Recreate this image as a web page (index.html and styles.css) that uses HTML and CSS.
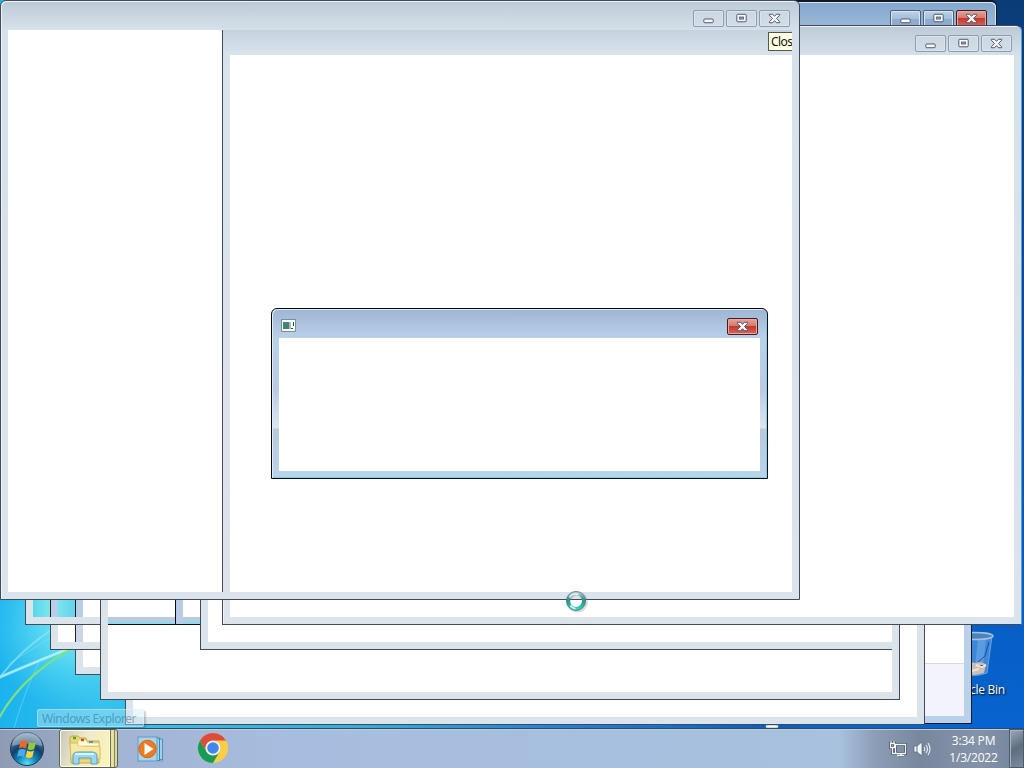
FILE: index.html
```html
<!DOCTYPE html>
<html lang="en">
<head>
<meta charset="utf-8">
<title>Desktop</title>
<link rel="stylesheet" href="styles.css">
</head>
<body>
<svg class="symbols" width="0" height="0" aria-hidden="true">
  <symbol id="min" viewBox="0 0 29 16"><rect x="9.500" y="8.500" width="10" height="4" rx="1" fill="#f7f9fb" stroke="#465165"/></symbol>
  <symbol id="max" viewBox="0 0 29 16"><rect x="9.500" y="3.500" width="10" height="8" rx="1" fill="#f7f9fb" stroke="#465165"/><rect x="12.500" y="6.500" width="4" height="2" fill="#b9c8d8" stroke="#465165"/></symbol>
  <symbol id="close" viewBox="0 0 29 16"><path d="M9 3.500h3.500l2 2.200 2-2.200H20v1L16.600 8l3.400 3.500v1h-3.500l-2-2.200-2 2.200H9v-1L12.400 8 9 4.500z" fill="#fafafa" stroke="#465165"/></symbol>
</svg>
<main class="desktop">
  <svg class="wallpaper" width="1024" height="768" viewBox="0 0 1024 768">
    <defs>
      <linearGradient id="sky"><stop offset="0" stop-color="#1bb2ee"/><stop offset=".1" stop-color="#35c2ed"/><stop offset=".35" stop-color="#36add8"/><stop offset=".55" stop-color="#2381d3"/><stop offset=".76" stop-color="#0b5dbd"/><stop offset="1" stop-color="#0960cc"/></linearGradient>
      <linearGradient id="night" x1="0" y1="0" x2="0" y2="1"><stop offset="0" stop-color="#0a3c78"/><stop offset=".7" stop-color="#075bbd"/><stop offset="1" stop-color="#0865d4"/></linearGradient>
      <radialGradient id="glow"><stop offset="0" stop-color="#8af2f4"/><stop offset="1" stop-color="#54dcf4" stop-opacity="0"/></radialGradient>
    </defs>
    <rect width="1024" height="768" fill="url(#sky)"/>
    <rect x="800" width="224" height="768" fill="url(#night)"/>
    <ellipse cx="75" cy="625" rx="90" ry="85" fill="url(#glow)"/>
    <g fill="none" stroke-linecap="round">
      <path d="M-4 679Q25 666 78 645" stroke="#c5f3fd" stroke-width="2.500" opacity=".8"/>
      <path d="M-2 680Q18 652 54 628" stroke="#92e5f8" stroke-width="2" opacity=".7"/>
      <path d="M10 663L50 638M14 728Q25 690 40 660" stroke="#83e1f8" opacity=".5"/>
      <path d="M-3 722Q20 676 78 645" stroke="#7ee37c" stroke-width="2"/>
      <path d="M767 726.500h10" stroke="#fff" stroke-width="2.500"/>
    </g>
  </svg>
  <div class="bin">
    <svg width="48" height="50" viewBox="0 0 48 50"><path d="M5 7h36l-5 37q-14 5-26 0z" fill="#3d86d8" stroke="#68a5df"/><path d="M27 9h8l-3 29h-8z" fill="#71aeea" opacity=".55"/><path d="M38 13l-4 14-7 6" fill="none" stroke="#16529c"/><path d="M10 39q7-8 14-5 8-2 11 2l-2 8q-12 4-23 0z" fill="#cbbeb5"/><path d="M25 36l6 2 4-2M21 42l7-2" stroke="#f2e4d4" stroke-width="2"/><ellipse cx="23" cy="7" rx="19" ry="3.500" fill="#4c83bb" stroke="#a6c2d8" stroke-width="1.500"/></svg>
    <span>Recycle Bin</span>
  </div>

  <section class="window active side"><div class="client split"><div></div><div class="footer-pane"></div></div></section>
  <section class="window active caption-only">
    <div class="controls"><svg class="ctl"><use href="#min"/></svg><svg class="ctl"><use href="#max"/></svg><svg class="ctl red"><use href="#close"/></svg></div>
  </section>
  <section class="window w125"><div class="client"></div></section>
  <section class="window w75"><div class="client"></div></section>
  <section class="window w50"><div class="client"><div class="trail edge"></div></div></section>
  <section class="window w25"><div class="client">
    <div class="trail trail50"></div><div class="trail trail75"></div>
  </div></section>
  <section class="window w100"><div class="client">
    <div class="trail strip"></div><div class="trail strip175"></div>
    <div class="window w200"><div class="client"></div></div>
  </div></section>
  <section class="window w222">
    <div class="controls"><svg class="ctl"><use href="#min"/></svg><svg class="ctl"><use href="#max"/></svg><svg class="ctl"><use href="#close"/></svg></div>
    <div class="client"></div>
  </section>
  <section class="window front">
    <div class="controls"><svg class="ctl"><use href="#min"/></svg><svg class="ctl"><use href="#max"/></svg><svg class="ctl"><use href="#close"/></svg></div>
    <div class="client columns"><div class="left-pane"></div><div class="right-pane"><div class="inner"></div></div><div class="tip">Clos</div></div>
  </section>
  <section class="window active dialog">
    <svg class="app-icon" width="17" height="14" viewBox="0 0 17 14"><rect x=".5" y=".5" width="14" height="12" fill="#f9fcf9" stroke="#7c9292"/><rect x="2" y="3" width="6" height="7" fill="#487f7d"/><path d="M8 3h2v7H8z" fill="#a2c4bc"/><path d="M12.500 3v4M10 9.500h2" stroke="#34484c"/></svg>
    <div class="controls"><svg class="ctl red"><use href="#close"/></svg></div>
    <div class="client"></div>
  </section>
  <svg class="cursor" width="26" height="26" viewBox="0 0 26 26">
    <defs><linearGradient id="ring" x1="0" y1="0" x2="0" y2="1"><stop offset="0" stop-color="#a9c9cb"/><stop offset=".38" stop-color="#438a91"/><stop offset=".65" stop-color="#24a89a"/><stop offset="1" stop-color="#2bd6ba"/></linearGradient></defs>
    <circle cx="14.500" cy="14" r="8.500" fill="none" stroke="#777" stroke-width="4" opacity=".25"/>
    <circle cx="13" cy="13" r="7.800" fill="none" stroke="url(#ring)" stroke-width="3.600"/>
    <circle cx="13" cy="13" r="9.600" fill="none" stroke="#44706f" stroke-width=".7"/>
    <path d="M6.500 9.500q3-5 9-3M7.500 17.500q2 3 5 3" fill="none" stroke="#e3f8f4" stroke-width="1.500"/>
  </svg>
  <div class="task-tip">Windows Explorer</div>
  <footer class="taskbar">
    <svg class="start" width="36" height="36" viewBox="0 0 36 36">
      <defs><radialGradient id="orb" cx=".5" cy=".95" r=".95"><stop offset="0" stop-color="#54e4f9"/><stop offset=".3" stop-color="#1386b7"/><stop offset=".58" stop-color="#123f69"/><stop offset="1" stop-color="#8ca6bb"/></radialGradient></defs>
      <circle cx="18" cy="18" r="16.500" fill="url(#orb)" stroke="#183c5c"/>
      <path d="M3 15a15 14 0 0 1 30 0q-15-5-30 0" fill="#d5e4ed" opacity=".4"/>
      <path d="M11.500 10.500q3.500-2 7 0l-1.500 7q-3.500-2-7 0z" fill="#ef6728"/><path d="M20 11q3 2 7 0l-1.700 7q-3.500 2-6.800 0z" fill="#91c83d"/>
      <path d="M9.700 19q3.500-2 7 0L15 26q-3.500-2-7 0z" fill="#4baae8"/><path d="M18.200 19.500q3.300 2 6.800 0L23.300 26q-3.500 2-6.700 0z" fill="#fbd23c"/>
    </svg>
    <div class="task-stack"><div class="task-button">
      <svg width="32" height="32" viewBox="0 0 32 32"><path d="M1 4q0-2 2-2h6l2 2h6l1 3h12v22H2z" fill="#edd978" stroke="#c5a94b"/><path d="M1 9h12l2 3h16v13H2z" fill="#f8e9a0" stroke="#d5bc60"/><path d="M9 6h8l2 3h11v3H9z" fill="#fffbdc" stroke="#d5bc60" stroke-width=".6"/><path d="M4 4h3" stroke="#43a743" stroke-width="2.500"/><path d="M12 6h3" stroke="#c94c38" stroke-width="2.500"/><path d="M20 8h4" stroke="#5595c7" stroke-width="2"/><path d="M4 30v-8q0-4 5-4h14q5 0 5 4v8h-6v-6H10v6z" fill="#9bd7ef" stroke="#579fc4"/><path d="M6 20h19" stroke="#d9f5ff" stroke-width="2"/></svg>
    </div></div>
    <svg class="player" width="30" height="28" viewBox="0 0 30 28"><path d="M22 26l7-2-3 3z" fill="#788ba9" opacity=".5"/><path d="M22 4h4.500v20.500H22z" fill="#a3d0e8" stroke="#4c91b9"/><path d="M20 3h3.500v22.500H20z" fill="#a3d4ea" stroke="#3b83ad"/><rect x="2" y="2" width="19" height="24" fill="#a9d4ea" stroke="#599dbf"/><circle cx="11.500" cy="14" r="8.700" fill="#ec7b22" stroke="#d76718"/><path d="M8.500 8l9 6-9 6z" fill="#fff"/></svg>
    <svg class="chrome" width="32" height="32" viewBox="0 0 32 32"><circle cx="16" cy="16" r="15" fill="#f9cd45"/><path d="M3 8.500A15 15 0 0 1 29 8.500H16a7.500 7.500 0 0 0-6.500 11.300z" fill="#dc4b3e"/><path d="M3 8.500l6.500 11.300a7.500 7.500 0 0 0 13 0L16 31A15 15 0 0 1 3 8.500" fill="#189b58"/><circle cx="16" cy="16" r="7.300" fill="#f1f5f7"/><circle cx="16" cy="16" r="5.800" fill="#4285ed"/></svg>
    <div class="tray">
      <svg width="18" height="18" viewBox="0 0 18 18"><path d="M6.500 4.500h10v9h-10zM9 15.500h6M12 13v3M2 1v3M5 1v3M1.500 3.500h4v4h-4zM3.500 8v5.500H6" fill="none" stroke="#36424e" stroke-width="2.600"/><path d="M6.500 4.500h10v9h-10zM8 15.500h7M12 13v3M2 1v3M5 1v3M1.500 3.500h4v4h-4zM3.500 8v5.500H6" fill="none" stroke="#f2f5f7" stroke-width="1.300"/></svg>
      <svg width="18" height="18" viewBox="0 0 18 18"><path d="M1 6h3l5-4v14l-5-4H1z" fill="#f4f6f7" stroke="#56616e" stroke-width=".7"/><path d="M4 6v6" stroke="#647080"/><path d="M11 7q1.500 2 0 4M13 5q3 4 0 8M15 3q4 6 0 12" fill="none" stroke="#edf1f4" stroke-width="1.100"/></svg>
      <div class="clock"><span>3:34 PM</span><span>1/3/2022</span></div>
      <div class="show-desktop"></div>
    </div>
  </footer>
</main>
</body>
</html>
```
FILE: styles.css
```css
* { box-sizing: border-box; }
body { margin: 0; overflow: hidden; font: 12px/15px "Noto Sans", "Open Sans", sans-serif; }
.symbols { position: absolute; }
.desktop { position: relative; width: 1024px; height: 768px; overflow: hidden; }
.wallpaper { position: absolute; inset: 0; }
.bin { position: absolute; left: 935px; top: 629px; width: 80px; display: flex; flex-direction: column; align-items: center; gap: 4px; color: #fff; font: 12px/14px "Open Sans", sans-serif; letter-spacing: -.25px; text-shadow: 1px 1px 2px #000; }

.window { position: absolute; display: flex; flex-direction: column; border: 1px solid #414a59; padding: 29px 7px 7px; background: #dbe3eb; }
.client { position: relative; flex: 1; background: #fff; overflow: hidden; }
.active { background: #b9d1ea; border-color: #101820; }
.controls { position: absolute; display: flex; gap: 2px; top: 9px; right: 9px; }
.ctl { display: block; width: 31px; height: 17px; border: 1px solid #8e9caf; border-radius: 2px; background: linear-gradient(#cbd7e2, #d4dde7); box-shadow: inset 0 0 0 1px #dce5ed; }
.ctl.red { border-color: #421c24; background: linear-gradient(#e5a39b, #d6756b 48%, #c03a2e 50%, #dc6356); box-shadow: inset 0 0 0 1px #eaa79e; }

.front { left: 0; top: 0; width: 800px; height: 600px; border-radius: 6px 6px 0 0; background: linear-gradient(#bdcad6, #d7e1eb 30px, #dbe3eb); box-shadow: inset 1px 1px #edf2f6; }
.columns { display: flex; }
.left-pane { width: 214px; }
.right-pane { flex: 1; display: flex; border-left: 1px solid #414a59; padding: 25px 0 0 7px; background: linear-gradient(#c6d2de, #d9e3ec 25px, #dbe3eb); }
.inner { flex: 1; background: #fff; }
.tip { position: absolute; right: 0; top: 2px; width: 24px; height: 19px; padding: 1px 0 0 2px; border: 1px solid #555; border-right: 0; background: #ffffe1; color: #111; letter-spacing: -.6px; white-space: nowrap; }
.w222 { left: 222px; top: 25px; width: 800px; height: 600px; border-radius: 6px 6px 0 0; border-right-color: #5ba0d4; background: linear-gradient(#bdcad6, #d7e1eb 30px, #dbe3eb); box-shadow: inset 1px 1px #edf2f6; }
.caption-only { left: 197px; top: 0; width: 800px; height: 100px; border-radius: 6px 6px 0 0; border-top-width: 2px; background: linear-gradient(#84a6cc, #9db9d9 27px); box-shadow: inset -1px 1px #d7e5f3; }
.caption-only .controls { top: 8px; right: 9px; }
.caption-only .ctl:not(.red) { border-color: #49617f; background: linear-gradient(#bed1e5, #a7bfda 50%, #8eacd0 52%); }
.dialog { left: 271px; top: 308px; width: 497px; height: 171px; border-radius: 6px 6px 0 0; border-color: #050a0f; background: linear-gradient(#9eb5d4, #b9d1e8 29px, #b9cbe4 80px, #dce6f1 119px, #b7cadd 120px, #b9d4ec); box-shadow: inset 1px 1px #e0ebf5, inset -1px -1px #74d5ed; }
.app-icon { position: absolute; left: 9px; top: 10px; }

.side { left: 500px; top: 300px; width: 472px; height: 424px; }
.split { display: grid; grid-template-rows: 333px 1fr; }
.footer-pane { background: #f3f3fc; border-top: 1px solid #d5d8df; }
.w125 { left: 125px; top: 125px; width: 800px; height: 600px; }
.w75 { left: 75px; top: 75px; width: 800px; height: 600px; }
.w50 { left: 50px; top: 50px; width: 800px; height: 600px; }
.w25 { left: 25px; top: 25px; width: 800px; height: 600px; }
.w25 .client { background: linear-gradient(90deg, #58d8ea, #83e8ee 20px, #65d5ed 40px); }
.trail { position: absolute; }
.edge { left: 17px; top: 0; bottom: 0; width: 8px; border-left: 1px solid #222; background: #cbd7e8; }
.trail50 { left: 17px; top: 0; bottom: 0; width: 8px; border-left: 1px solid #111; background: #b8cde7; }
.trail75 { left: 42px; top: 0; bottom: 0; width: 80px; border-left: 1px solid #111; background: linear-gradient(90deg, #b8cde7 7px, #fff 7px); }
.w100 { left: 100px; top: 100px; width: 800px; height: 600px; }
.strip { left: 0; top: 487px; width: 100px; height: 8px; border-bottom: 1px solid #080c10; background: linear-gradient(#b8cbe0 5px, #8cdcf0 5px); }
.strip175 { left: 67px; top: 0; width: 8px; height: 494px; border-left: 1px solid #080c10; background: #b8cde7; }
.w200 { left: 92px; top: 100px; width: 800px; height: 420px; }
.cursor { position: absolute; left: 563px; top: 588px; }
.task-tip { position: absolute; left: 37px; top: 709px; width: 107px; height: 18px; padding: 1px 0 0 4px; border: 1px solid rgba(230,247,252,.4); border-radius: 2px; background: rgba(205,233,244,.4); color: rgba(42,112,145,.55); letter-spacing: -.47px; white-space: nowrap; box-shadow: 2px 2px 2px rgba(30,50,70,.25); }

.taskbar { position: absolute; left: 0; top: 728px; width: 1024px; height: 40px; display: flex; align-items: center; border-top: 1px solid #294b6c; box-shadow: inset 0 1px #bccde0; background: linear-gradient(90deg, #8e9bb3, #98a7c1 60px, #a3b4d5 120px, #a7bddf 300px, #a8c1de 840px, #8c9db6 875px, #77879d 920px, #8593a9 980px, #72839a); }
.start { margin-left: 9px; }
.task-stack { width: 59px; height: 39px; margin-left: 14px; border: 1px solid #5b624d; border-radius: 3px; background: linear-gradient(90deg, #f3efc8 50px, #716f4f 50px 51px, #e7e1a4 51px 54px, #858366 54px 55px, #ddd8a0 55px); }
.task-button { width: 50px; height: 37px; padding: 3px 0 0 8px; border: 1px solid #fbfbec; border-radius: 2px; background: linear-gradient(110deg, #cbc9b8, #f0ebc9 45%, #faf4b8); }
.player { margin-left: 18px; }
.chrome { margin: 0 0 2px 31px; }
.tray { flex: 1; align-self: stretch; display: flex; align-items: center; justify-content: flex-end; gap: 6px; }
.clock { display: flex; flex-direction: column; align-items: center; width: 65px; margin-left: 4px; padding-top: 1px; color: #fff; font: 12px/17px "Open Sans", sans-serif; letter-spacing: -.2px; }
.show-desktop { align-self: stretch; width: 15px; border: 1px solid #4b5b6e; background: linear-gradient(150deg, #9ca8b7, #5e6d82 50%, #7c8b9e); box-shadow: inset 1px 1px #aab4c0; margin-left: -3px; }
```
